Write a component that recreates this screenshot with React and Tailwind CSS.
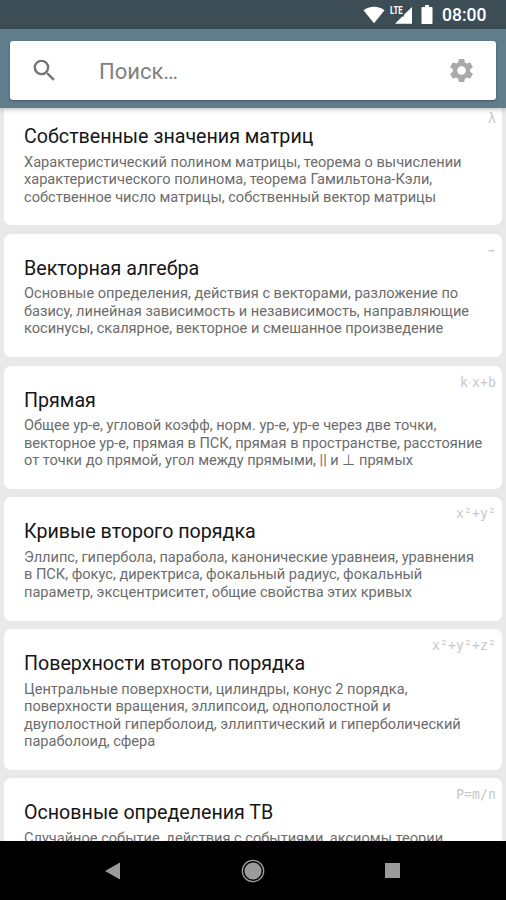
import React from 'react';

const topics = [
    {
        title: 'Собственные значения матриц',
        mark: 'λ',
        lines: [
            'Характеристический полином матрицы, теорема о вычислении',
            'характеристического полинома, теорема Гамильтона-Кэли,',
            'собственное число матрицы, собственный вектор матрицы',
        ],
    },
    {
        title: 'Векторная алгебра',
        mark: '→',
        lines: [
            'Основные определения, действия с векторами, разложение по',
            'базису, линейная зависимость и независимость, направляющие',
            'косинусы, скалярное, векторное и смешанное произведение',
        ],
    },
    {
        title: 'Прямая',
        mark: 'k·x+b',
        lines: [
            'Общее ур-е, угловой коэфф, норм. ур-е, ур-е через две точки,',
            'векторное ур-е, прямая в ПСК, прямая в пространстве, расстояние',
            'от точки до прямой, угол между прямыми, || и ⊥ прямых',
        ],
    },
    {
        title: 'Кривые второго порядка',
        mark: 'x²+y²',
        lines: [
            'Эллипс, гипербола, парабола, канонические уравнеия, уравнения',
            'в ПСК, фокус, директриса, фокальный радиус, фокальный',
            'параметр, эксцентриситет, общие свойства этих кривых',
        ],
    },
    {
        title: 'Поверхности второго порядка',
        mark: 'x²+y²+z²',
        lines: [
            'Центральные поверхности, цилиндры, конус 2 порядка,',
            'поверхности вращения, эллипсоид, однополостной и',
            'двуполостной гиперболоид, эллиптический и гиперболический',
            'параболоид, сфера',
        ],
    },
    {
        title: 'Основные определения ТВ',
        mark: 'P=m/n',
        lines: ['Случайное событие, действия с событиями, аксиомы теории'],
    },
];

function StatusBar() {
    return (
        <div className="flex h-[29px] shrink-0 items-center justify-end bg-[#3c4d55] pr-[19.500px] text-white">
            <svg className="mt-[1px] h-[18px] w-[22px]" viewBox="0 0 22 18" fill="currentColor">
                <path d="M.5 4.2C3.4 1.9 7 .7 11 .7s7.600 1.200 10.500 3.500L11 17.200z" />
            </svg>
            <div className="relative ml-[4px] h-[18px] w-[24px]">
                <span className="absolute left-[1px] top-0 origin-left scale-x-[.72] text-[11px] font-bold leading-[10px]">LTE</span>
                <svg className="h-[18px] w-[24px]" viewBox="0 0 24 18" fill="currentColor">
                    <path d="M23 1v16.800H6l7-7V10.500h2V8.800z" />
                </svg>
            </div>
            <svg className="ml-[8px] h-[19px] w-[12px]" viewBox="0 0 12 19" fill="currentColor">
                <path d="M4 0h4v2h2.500c.6 0 1 .4 1 1v15c0 .6-.4 1-1 1h-9c-.6 0-1-.4-1-1V3c0-.6.4-1 1-1H4z" />
            </svg>
            <span className="ml-[9px] mt-[2px] text-[17.500px] font-medium leading-none">08:00</span>
        </div>
    );
}

function SearchBar() {
    return (
        <header className="relative z-10 h-[79px] shrink-0 bg-[#607d8b] px-[10px] pt-[12px] shadow-[0_1px_5px_rgba(0,0,0,0.3)]">
            <div className="flex h-[59px] items-center rounded-[3px] bg-white pl-[20px] pr-[20px] shadow-[0_1px_2px_rgba(0,0,0,0.3)]">
                <svg className="h-[29px] w-[29px] text-[#757575]" viewBox="0 0 24 24" fill="currentColor">
                    <path d="M15.500 14h-.79l-.28-.27A6.471 6.471 0 0 0 16 9.500 6.500 6.500 0 1 0 9.500 16c1.610 0 3.090-.59 4.230-1.570l.27.28v.79l5 4.990L20.490 19l-4.990-5zm-6 0C7.010 14 5 11.990 5 9.500S7.010 5 9.500 5 14 7.010 14 9.500 11.990 14 9.500 14z" />
                </svg>
                <span className="ml-[40px] mt-[2px] grow text-[22px] leading-none text-[#808080]">Поиск…</span>
                <svg className="h-[29px] w-[29px] text-[#a9a9a9]" viewBox="0 0 24 24" fill="currentColor">
                    <path d="M19.140 12.940c.04-.3.06-.61.06-.94 0-.32-.02-.64-.07-.94l2.030-1.580c.18-.14.23-.41.12-.61l-1.920-3.320c-.12-.22-.37-.29-.59-.22l-2.390.96c-.5-.38-1.030-.7-1.620-.94l-.36-2.540c-.04-.24-.24-.41-.48-.41h-3.840c-.24 0-.43.17-.47.41l-.36 2.540c-.59.24-1.130.57-1.620.94l-2.390-.96c-.22-.08-.47 0-.59.22L2.740 8.870c-.12.21-.08.47.12.61l2.030 1.580c-.05.3-.09.63-.09.94s.02.64.07.94l-2.030 1.580c-.18.14-.23.41-.12.61l1.920 3.320c.12.22.37.29.59.22l2.390-.96c.5.38 1.030.7 1.620.94l.36 2.540c.05.24.24.41.48.41h3.840c.24 0 .44-.17.47-.41l.36-2.540c.59-.24 1.130-.56 1.620-.94l2.390.96c.22.08.47 0 .59-.22l1.920-3.320c.12-.22.07-.47-.12-.61l-2.010-1.580zM12 15.600c-1.980 0-3.600-1.620-3.600-3.600s1.620-3.600 3.600-3.600 3.600 1.620 3.600 3.600-1.620 3.600-3.600 3.600z" />
                </svg>
            </div>
        </header>
    );
}

function Mark({ text }) {
    return (
        <span className="absolute right-[6px] top-[8px] flex font-['DejaVu_Sans_Mono',monospace] text-[13.200px] leading-[17px] text-[#c8c8c8]">
            {text.split('').map((char, i) => {
                if (char === '·') {
                    return <span key={i} className="w-[4px] text-center font-['Roboto',sans-serif]">{char}</span>;
                }
                if (char === '→') {
                    return <span key={i} className="w-[10px] text-center text-[11px]">{char}</span>;
                }
                return <span key={i} className="w-[8px] text-center">{char}</span>;
            })}
        </span>
    );
}

function TopicCard({ topic }) {
    return (
        <article className="relative shrink-0 rounded-[7px] bg-white pb-[19.250px] pl-[20px] pt-[23px]">
            <Mark text={topic.mark} />
            <h2 className="whitespace-nowrap text-[19.650px] leading-[24px] text-[#161616]">{topic.title}</h2>
            <p className="mt-[4.500px] whitespace-nowrap text-[14.580px] leading-[17.500px] text-[#6c6c6c]">
                {topic.lines.map((line) => (
                    <span key={line} className="block">{line}</span>
                ))}
            </p>
        </article>
    );
}

function NavBar() {
    return (
        <nav className="flex h-[59px] shrink-0 items-center justify-between bg-black pl-[104px] pr-[106px] text-[#9b9b9b]">
            <svg className="h-[20px] w-[18px]" viewBox="0 0 18 20" fill="currentColor">
                <path d="M1 10L16 1.500v17z" />
            </svg>
            <svg className="-ml-[2px] h-[24px] w-[24px]" viewBox="0 0 24 24" fill="currentColor">
                <circle cx="12" cy="12" r="10.700" fill="none" stroke="currentColor" strokeWidth="1.300" />
                <circle cx="12" cy="12" r="8.600" />
            </svg>
            <span className="h-[15px] w-[15px] bg-[#9b9b9b]"></span>
        </nav>
    );
}

export default function App() {
    return (
        <div className="flex h-[900px] w-[506px] flex-col overflow-hidden bg-[#e9e9e9] font-['Roboto',sans-serif]">
            <StatusBar />
            <SearchBar />
            <main className="min-h-0 grow overflow-hidden">
                <div className="-mt-[6px] flex flex-col gap-[8.500px] px-[4px]">
                    {topics.map((topic) => (
                        <TopicCard key={topic.title} topic={topic} />
                    ))}
                </div>
            </main>
            <NavBar />
        </div>
    );
}
